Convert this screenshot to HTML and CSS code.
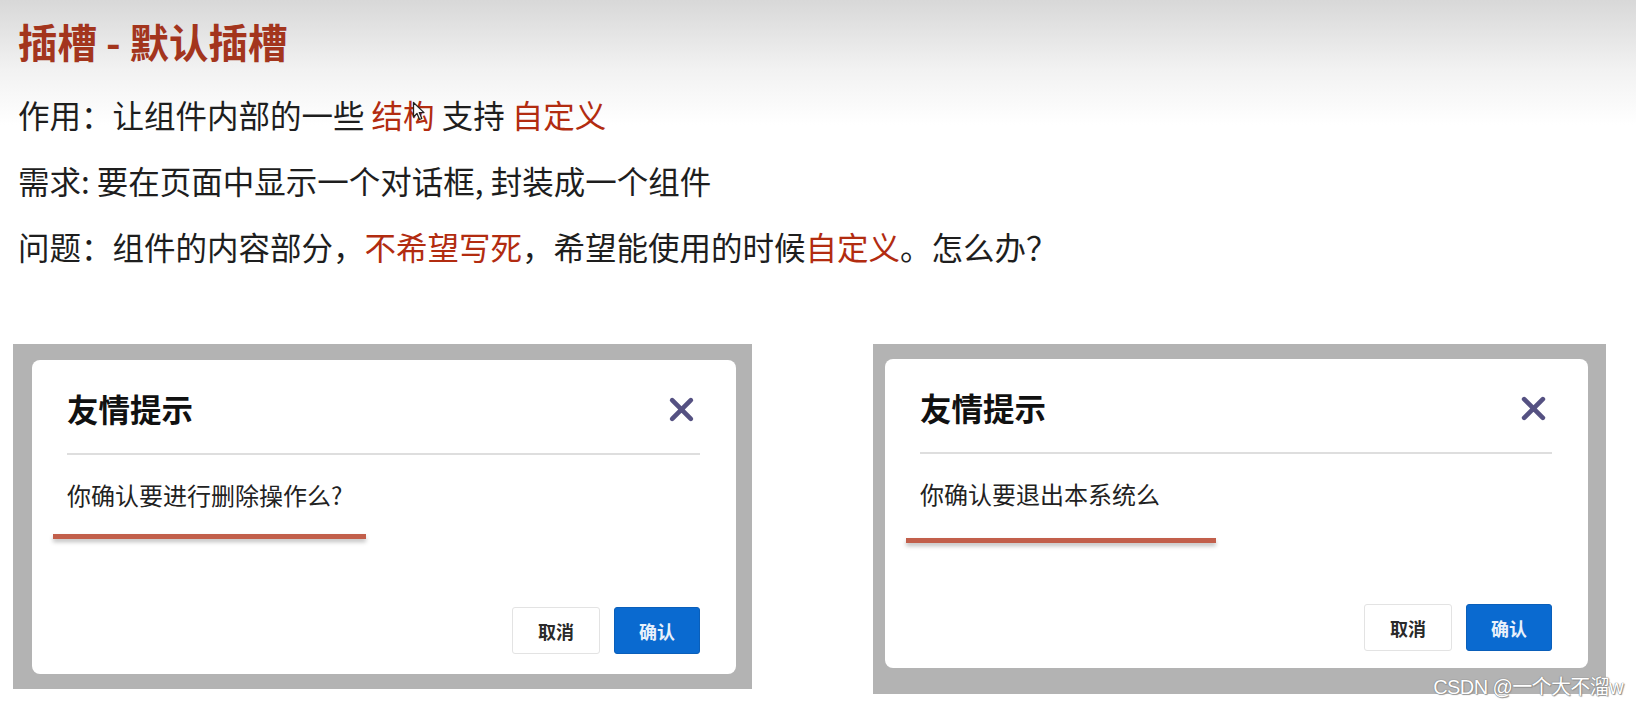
FILE: index.html
```html
<!DOCTYPE html>
<html lang="zh-CN">

<head>
    <meta charset="UTF-8">
    <title>插槽 - 默认插槽</title>
    <link rel="stylesheet" href="styles.css">
</head>

<body>

    <div class="slide">
        <h1 class="title">插槽 - 默认插槽</h1>
        <p class="line">作用：让组件内部的一些 <span class="hl cursor-wrap">结构<svg class="cursor" viewBox="0 0 13 20" width="13" height="20"><path d="M1.5 1.5 L1.5 16 L5 12.5 L7.6 18.5 L9.8 17.5 L7.3 11.6 L12 11.6 Z" fill="#fff" stroke="#222" stroke-width="1.3" stroke-linejoin="round"/></svg></span> 支持 <span class="hl">自定义</span></p>
        <p class="line">需求: 要在页面中显示一个对话框, 封装成一个组件</p>
        <p class="line">问题：组件的内容部分，<span class="hl">不希望写死</span>，希望能使用的时候<span class="hl">自定义</span>。怎么办？</p>

        <div class="demos">
            <div class="frame frame-left">
                <div class="dialog">
                    <div class="dialog-head">
                        <span class="dialog-title">友情提示</span>
                        <svg class="close" viewBox="0 0 26 26" width="27" height="27">
                            <path d="M4 4 L22 22 M22 4 L4 22" stroke="#555182" stroke-width="4.5" stroke-linecap="round"/>
                        </svg>
                    </div>
                    <div class="dialog-body">你确认要进行删除操作么?</div>
                    <div class="mark mark-left"></div>
                    <div class="dialog-foot">
                        <button class="btn btn-cancel">取消</button>
                        <button class="btn btn-ok">确认</button>
                    </div>
                </div>
            </div>

            <div class="frame frame-right">
                <div class="dialog">
                    <div class="dialog-head">
                        <span class="dialog-title">友情提示</span>
                        <svg class="close" viewBox="0 0 26 26" width="27" height="27">
                            <path d="M4 4 L22 22 M22 4 L4 22" stroke="#555182" stroke-width="4.5" stroke-linecap="round"/>
                        </svg>
                    </div>
                    <div class="dialog-body">你确认要退出本系统么</div>
                    <div class="mark mark-right"></div>
                    <div class="dialog-foot">
                        <button class="btn btn-cancel">取消</button>
                        <button class="btn btn-ok">确认</button>
                    </div>
                </div>
            </div>
        </div>

        <div class="watermark">CSDN @一个大不溜w</div>
    </div>

</body>

</html>
```

FILE: styles.css
```css
* {
    margin: 0;
    padding: 0;
    box-sizing: border-box;
}

html,
body {
    width: 1636px;
    height: 705px;
    overflow: hidden;
}

body {
    background: linear-gradient(#d8d8d8 0, #f2f2f2 70px, #fff 125px);
    font-family: "Noto Sans CJK SC", "Microsoft YaHei", sans-serif;
    color: #1e1e1e;
}

.slide {
    position: relative;
    height: 100%;
    padding-top: 19px;
}

.title {
    padding-left: 18px;
    font-size: 39.5px;
    line-height: 44px;
    font-weight: 700;
    color: #a3351d;
}

.line {
    padding-left: 18px;
    font-size: 31.5px;
    line-height: 66px;
}

.title + .line {
    margin-top: 18px;
}

.hl {
    color: #b22c10;
}

.cursor-wrap {
    position: relative;
}

.cursor {
    position: absolute;
    left: 40px;
    top: 10px;
}

/* dialog demos */
.demos {
    display: flex;
    margin-top: 65px;
    padding-left: 13px;
}

.frame {
    background: #b3b3b3;
    display: flex;
}

.frame-left {
    width: 739px;
    height: 345px;
    padding: 16px 16px 15px 19px;
}

.frame-right {
    width: 733px;
    height: 350px;
    margin-left: 121px;
    padding: 15px 18px 26px 12px;
}

.dialog {
    flex: 1;
    background: #fff;
    border-radius: 8px;
    padding: 0 36px 20px 35px;
    display: flex;
    flex-direction: column;
}

.frame-right .dialog {
    padding-bottom: 17px;
}

.dialog-head {
    height: 95px;
    display: flex;
    align-items: center;
    justify-content: space-between;
    border-bottom: 2px solid #dedede;
}

.dialog-title {
    font-size: 31.5px;
    font-weight: 700;
    color: #111;
    padding-top: 2px;
}

.close {
    margin-right: 5px;
    margin-top: 6px;
}

.dialog-body {
    margin-top: 25px;
    font-size: 24px;
    line-height: 30px;
    color: #222;
}

.mark {
    height: 5px;
    background: #c25f4b;
    box-shadow: 0 3px 4px rgba(0, 0, 0, 0.25);
    margin-left: -14px;
    margin-top: 24px;
}

.mark-left {
    width: 313px;
}

.mark-right {
    width: 310px;
    margin-top: 29px;
}

.dialog-foot {
    margin-top: auto;
    display: flex;
    justify-content: flex-end;
    gap: 14px;
}

.btn {
    width: 88px;
    height: 47px;
    border-radius: 3px;
    font-family: inherit;
    font-size: 18px;
    font-weight: 700;
}

.btn-cancel {
    background: #fff;
    border: 1px solid #e3e3e3;
    color: #2a2a2a;
}

.btn-ok {
    width: 86px;
    background: #0a6ad0;
    border: 1px solid #0a5fba;
    color: #e8f1fb;
}

.watermark {
    position: absolute;
    right: 13px;
    bottom: 5px;
    font-family: "Liberation Sans", "Noto Sans CJK SC", sans-serif;
    font-size: 20px;
    letter-spacing: -0.6px;
    color: #fff;
    text-shadow: 0 0 1px #777, 0 0 1px #777, 1px 1px 1px #999;
}
```
